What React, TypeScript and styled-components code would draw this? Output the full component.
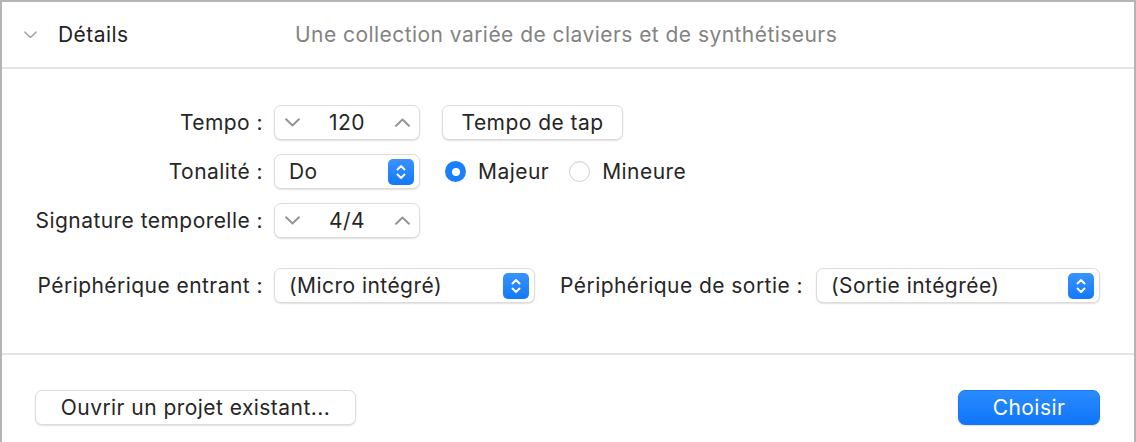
import React from "react";
import styled, { createGlobalStyle } from "styled-components";

const GlobalStyle = createGlobalStyle`
    html, body {
        margin: 0;
        padding: 0;
        background: #ffffff;
    }
    body {
        font-family: Inter, "Liberation Sans", sans-serif;
        color: #262626;
        letter-spacing: 0.45px;
        -webkit-font-smoothing: antialiased;
    }
`;

const Frame = styled.div`
    box-sizing: border-box;
    width: 1136px;
    height: 442px;
    border-top: 2px solid #b4b4b4;
    border-left: 2px solid #b4b4b4;
    border-right: 2px solid #b4b4b4;
    background: #ffffff;
    display: flex;
    flex-direction: column;
    overflow: hidden;
`;

const Header = styled.div`
    height: 65px;
    flex: none;
    display: flex;
    align-items: center;
    border-bottom: 2px solid #e4e4e4;
    font-size: 21px;
`;

const Disclosure = styled.div`
    width: 56px;
    display: flex;
    justify-content: flex-start;
    padding-left: 22px;
    box-sizing: border-box;
    color: #a6a6a6;
`;

const HeaderTitle = styled.div`
    width: 237px;
    color: #222222;
`;

const HeaderDesc = styled.div`
    color: #838383;
`;

const Body = styled.div`
    flex: none;
    height: 286px;
    box-sizing: border-box;
    padding-top: 36px;
    border-bottom: 2px solid #e4e4e4;
    display: flex;
    flex-direction: column;
    gap: 14px;
`;

const Row = styled.div<{ $spaced?: boolean }>`
    display: flex;
    align-items: center;
    height: 35px;
    margin-top: ${p => (p.$spaced ? "16px" : "0")};
    font-size: 21px;
`;

const Label = styled.div<{ $width?: number; $gap?: number }>`
    width: ${p => p.$width ?? 261}px;
    margin-left: ${p => p.$gap ?? 0}px;
    text-align: right;
    white-space: nowrap;
    flex: none;
    color: #262626;
`;

const Control = styled.div<{ $width: number; $gap?: number }>`
    box-sizing: border-box;
    width: ${p => p.$width}px;
    height: 35px;
    margin-left: ${p => p.$gap ?? 11}px;
    border: 1px solid #dcdcdc;
    border-radius: 7px;
    box-shadow: 0 1px 1.5px rgba(0, 0, 0, 0.12);
    display: flex;
    align-items: center;
    background: #ffffff;
    flex: none;
`;

const StepArrow = styled.div`
    width: 34px;
    display: flex;
    justify-content: center;
    color: #949494;
`;

const StepValue = styled.div`
    flex: 1;
    text-align: center;
`;

const SelectText = styled.div`
    flex: 1;
    padding-left: 14px;
    white-space: nowrap;
`;

const SelectButton = styled.div`
    width: 26px;
    height: 26px;
    margin-right: 5px;
    border-radius: 5px;
    background: linear-gradient(#3a93fd, #1279fa);
    display: flex;
    align-items: center;
    justify-content: center;
`;

const PushButton = styled.button<{ $width: number; $primary?: boolean; $gap?: number }>`
    box-sizing: border-box;
    width: ${p => p.$width}px;
    height: 35px;
    margin-left: ${p => p.$gap ?? 0}px;
    border-radius: 7px;
    font-family: Inter, "Liberation Sans", sans-serif;
    font-size: 21px;
    letter-spacing: 0.45px;
    padding: 0;
    flex: none;
    cursor: default;
    color: ${p => (p.$primary ? "#ffffff" : "#262626")};
    background: ${p => (p.$primary ? "linear-gradient(#2a8bfd, #0f76fa)" : "#ffffff")};
    border: 1px solid ${p => (p.$primary ? "#1677f5" : "#dcdcdc")};
    box-shadow: 0 1px 1.5px rgba(0, 0, 0, 0.12);
`;

const RadioGroup = styled.div`
    display: flex;
    align-items: center;
    margin-left: 25px;
`;

const Radio = styled.div<{ $checked?: boolean }>`
    box-sizing: border-box;
    width: 21px;
    height: 21px;
    border-radius: 50%;
    flex: none;
    background: ${p => (p.$checked ? "#1a7ffb" : "#ffffff")};
    border: ${p => (p.$checked ? "none" : "1px solid #cfcfcf")};
    box-shadow: ${p => (p.$checked ? "none" : "inset 0 1px 1px rgba(0,0,0,0.06)")};
    display: flex;
    align-items: center;
    justify-content: center;
    &::after {
        content: "";
        display: ${p => (p.$checked ? "block" : "none")};
        width: 8px;
        height: 8px;
        border-radius: 50%;
        background: #ffffff;
    }
`;

const RadioLabel = styled.div`
    margin-left: 12px;
    margin-right: 20px;
`;

const Footer = styled.div`
    display: flex;
    justify-content: space-between;
    align-items: flex-start;
    padding: 35px 34px 0 33px;
`;

const Chevron = ({ up, size = 15, weight = 1.8 }: { up?: boolean; size?: number; weight?: number }) => (
    <svg width={size} height={size * 0.6} viewBox="0 0 14 8" fill="none">
        <path
            d={up ? "M1 7L7 1.2L13 7" : "M1 1L7 6.8L13 1"}
            stroke="currentColor"
            strokeWidth={weight}
            strokeLinecap="round"
            strokeLinejoin="round"
        />
    </svg>
);

const UpDown = () => (
    <svg width="12" height="18" viewBox="0 0 12 18" fill="none">
        <path d="M2.5 6.5L6 3L9.5 6.5" stroke="#fff" strokeWidth="1.9" strokeLinecap="round" strokeLinejoin="round" />
        <path d="M2.5 11.5L6 15L9.5 11.5" stroke="#fff" strokeWidth="1.9" strokeLinecap="round" strokeLinejoin="round" />
    </svg>
);

const Stepper = ({ value }: { value: string }) => (
    <Control $width={146}>
        <StepArrow><Chevron /></StepArrow>
        <StepValue>{value}</StepValue>
        <StepArrow><Chevron up /></StepArrow>
    </Control>
);

const Select = ({ value, width, gap }: { value: string; width: number; gap?: number }) => (
    <Control $width={width} $gap={gap}>
        <SelectText>{value}</SelectText>
        <SelectButton><UpDown /></SelectButton>
    </Control>
);

export default function App() {
    return (
        <>
            <GlobalStyle />
            <Frame>
                <Header>
                    <Disclosure><Chevron size={13} weight={1.6} /></Disclosure>
                    <HeaderTitle>Détails</HeaderTitle>
                    <HeaderDesc>Une collection variée de claviers et de synthétiseurs</HeaderDesc>
                </Header>
                <Body>
                    <Row>
                        <Label>Tempo :</Label>
                        <Stepper value="120" />
                        <PushButton $width={181} $gap={22}>Tempo de tap</PushButton>
                    </Row>
                    <Row>
                        <Label>Tonalité :</Label>
                        <Select value="Do" width={146} />
                        <RadioGroup>
                            <Radio $checked />
                            <RadioLabel>Majeur</RadioLabel>
                            <Radio />
                            <RadioLabel>Mineure</RadioLabel>
                        </RadioGroup>
                    </Row>
                    <Row>
                        <Label>Signature temporelle :</Label>
                        <Stepper value="4/4" />
                    </Row>
                    <Row $spaced>
                        <Label>Périphérique entrant :</Label>
                        <Select value="(Micro intégré)" width={261} />
                        <Label $width={243} $gap={25}>Périphérique de sortie :</Label>
                        <Select value="(Sortie intégrée)" width={284} gap={13} />
                    </Row>
                </Body>
                <Footer>
                    <PushButton $width={321}>Ouvrir un projet existant...</PushButton>
                    <PushButton $width={142} $primary>Choisir</PushButton>
                </Footer>
            </Frame>
        </>
    );
}
